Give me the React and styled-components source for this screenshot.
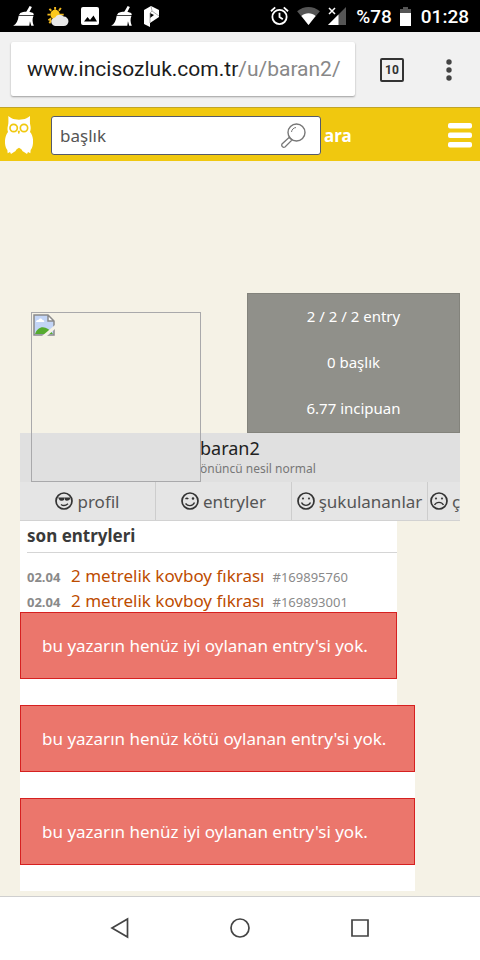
import React, { useState } from "react";
import styled, { createGlobalStyle } from "styled-components";

const GlobalStyle = createGlobalStyle`
  * {
    box-sizing: border-box;
  }
  body {
    margin: 0;
    background: #f5f2e6;
    font-family: "Noto Sans", "Open Sans", sans-serif;
  }
  button {
    border: 0;
    padding: 0;
    background: none;
    font-family: inherit;
    cursor: pointer;
  }
  svg {
    display: block;
    flex-shrink: 0;
  }
`;

const Screen = styled.div`
  min-height: 100vh;
  display: flex;
  flex-direction: column;
`;

/* phone chrome */

const StatusBar = styled.div`
  height: 32px;
  padding: 0 11px 0 13px;
  display: flex;
  align-items: center;
  justify-content: space-between;
  background: #000;
  color: #fff;
  font-family: Roboto, sans-serif;
  font-size: 19px;
  font-weight: 500;
`;

const StatusGroup = styled.div`
  display: flex;
  align-items: center;
  gap: ${(props) => props.$gap};
`;

const StatusText = styled.span`
  margin-left: 2px;
`;

const BrowserBar = styled.div`
  height: 75px;
  padding: 0 17px 0 11px;
  display: flex;
  align-items: center;
  background: #f1f1f1;
`;

const AddressBar = styled.button`
  flex: 1;
  min-width: 0;
  height: 54px;
  padding: 0 8px 0 16px;
  margin-bottom: 1px;
  overflow: hidden;
  white-space: nowrap;
  text-align: left;
  background: #fff;
  border-radius: 2px;
  box-shadow: 0 1px 2px rgba(0, 0, 0, 0.35);
  color: #1c1c1c;
  font-family: Roboto, sans-serif;
  font-size: 21px;
`;

const UrlPath = styled.span`
  color: #888;
`;

const TabCount = styled.button`
  width: 24px;
  height: 24px;
  margin: 0 31px 0 25px;
  border: 2px solid #333;
  border-radius: 2px;
  color: #333;
  font-family: Roboto, sans-serif;
  font-size: 12px;
  font-weight: 700;
  line-height: 20px;
`;

const NavBar = styled.nav`
  height: 64px;
  margin-top: auto;
  padding: 0 60px 2px;
  display: grid;
  grid-template-columns: repeat(3, 1fr);
  place-items: center;
  background: #fff;
  border-top: 1px solid #cfcfcf;
`;

/* site header */

const Header = styled.header`
  height: 54px;
  padding: 1px 8px 0 5px;
  display: flex;
  align-items: center;
  background: #f0c80f;
  border-top: 1px solid #c0a428;
`;

const SearchForm = styled.form`
  flex: 1;
  margin-left: 18px;
  display: flex;
  align-items: center;
  gap: 3px;
`;

const SearchBox = styled.div`
  width: 68%;
  height: 39px;
  padding: 0 14px 0 8px;
  display: flex;
  align-items: center;
  background: #fff;
  border: 1px solid #555a6b;
  border-radius: 3px;
`;

const SearchInput = styled.input`
  flex: 1;
  min-width: 0;
  padding: 0;
  border: 0;
  outline: 0;
  background: none;
  font-family: inherit;
  font-size: 17px;
  color: #555;

  &::placeholder {
    color: #555;
    opacity: 1;
  }
`;

const SearchButton = styled.button`
  color: #fff;
  font-size: 17px;
  font-weight: 700;
`;

/* profile */

const Page = styled.main`
  padding: 132px 20px 4px;
`;

const Cover = styled.section`
  position: relative;
`;

const Stats = styled.ul`
  width: 213px;
  margin: 0 0 0 auto;
  padding: 0;
  list-style: none;
  background: #90908a;
  border: 1px solid #83837c;
`;

const Stat = styled.li`
  height: 46px;
  line-height: 45px;
  text-align: center;
  color: #fff;
  font-size: 15px;
`;

const Avatar = styled.div`
  position: absolute;
  left: 11px;
  bottom: -49px;
  width: 170px;
  height: 170px;
  padding: 1px;
  border: 1px solid #a9a9ab;
`;

const NameBar = styled.div`
  height: 49px;
  padding: 4px 0 0 180px;
  background: #e0e0e0;
`;

const UserName = styled.h1`
  margin: 0;
  color: #222;
  font-size: 18px;
  font-weight: 400;
  line-height: 22px;
`;

const Generation = styled.p`
  margin: 0;
  color: #777;
  font-size: 12px;
  line-height: 20px;
`;

const Tabs = styled.nav`
  display: flex;
  height: 39px;
  overflow: hidden;
  background: #e5e5e5;
  border-bottom: 1px solid #d2d2d2;
`;

const Tab = styled.a`
  flex: 0 0 136px;
  display: flex;
  align-items: center;
  justify-content: ${(props) => (props.$cut ? "flex-start" : "center")};
  gap: 4px;
  padding-left: ${(props) => (props.$cut ? "2px" : "0")};
  border-right: 1px solid #cdcdcd;
  color: #555;
  font-size: 17px;
  text-decoration: none;
`;

/* entry lists */

const Panel = styled.section`
  width: max-content;
  max-width: 100%;
  background: #fff;
`;

const PanelTitle = styled.h2`
  margin: 0 0 0 7px;
  height: 32px;
  line-height: 30px;
  border-bottom: 1px solid #d5d5d5;
  color: #3a3a3a;
  font-size: 17px;
  font-weight: 700;
`;

const EntryList = styled.ul`
  margin: 0;
  padding: 9px 0 0 7px;
  list-style: none;
`;

const Entry = styled.li`
  display: flex;
  align-items: baseline;
  height: 25px;
  line-height: 27px;
  color: #8a8a8a;
  font-size: 13px;
`;

const EntryDate = styled.b`
  width: 44px;
`;

const EntryLink = styled.a`
  margin-right: 8px;
  color: #bd4c00;
  font-size: 17px;
  text-decoration: none;
`;

const Notice = styled.p`
  margin: 0;
  height: 67px;
  line-height: 66px;
  padding: 0 28px 0 21px;
  background: #eb766c;
  border: 1px solid #d62020;
  color: #fff;
  font-size: 17px;
`;

const NoticeSlot = styled.div`
  padding-bottom: 26px;
`;

/* icons */

const Broom = () => (
  <svg width="21" height="20" viewBox="0 0 64 62" fill="#fff">
    <path d="M51 0l7 3-9 18H39z" />
    <path d="M22 22c10-6 28-6 40 0l2 6H18z" />
    <path d="M17 30h46c-4 9-4 19 1 31H56l-4-14-2 14H0c10-5 15-15 17-31z" />
  </svg>
);

const Weather = () => (
  <svg width="23" height="21" viewBox="0 0 23 22">
    <g stroke="#f2b91d" strokeWidth="2">
      <path d="M9 1v3M3 3l2 2M1 9h3M2 15l3-2M15 2l-2 3M14 9h4M3 18l2-3" />
    </g>
    <circle cx="9" cy="9" r="5" fill="#fbc81d" />
    <path d="M10 21a4.500 4.500 0 0 1-1-9 5.500 5.500 0 0 1 9-1 5 5 0 0 1 0 10z" fill="#e9e9e9" />
  </svg>
);

const Picture = () => (
  <svg width="18" height="18" viewBox="0 0 18 18">
    <rect width="18" height="18" rx="2" fill="#fff" />
    <path d="M3 14.500 6.500 10l2.500 3 3.500-4.500 3.500 6z" fill="#000" />
  </svg>
);

const PLogo = () => (
  <svg width="16" height="21" viewBox="0 0 16 21">
    <path d="M0 4 7 0l8 4v7l-9 6v4l-6-3z" fill="#fff" />
    <path d="M6 7l4 2-4 3z" fill="#000" />
    <path d="M7 0l1 5 7 5M8 5 6 7v10" stroke="#999" strokeWidth=".8" fill="none" />
  </svg>
);

const Alarm = () => (
  <svg width="19" height="20" viewBox="0 0 20 20" fill="none" stroke="#fff" strokeWidth="1.900">
    <circle cx="10" cy="11" r="7.500" />
    <path d="M10 6.500V11l3.500 2.500M1 5l4.500-4M19 5l-4.500-4" />
  </svg>
);

const Wifi = () => (
  <svg width="23" height="18" viewBox="0 0 24 19">
    <path d="M0 4.500C7-1.500 17-1.500 24 4.500L12 19z" fill="#555" />
    <path d="M4.500 9.500c4-4 11-4 15 0L12 19z" fill="#fff" />
  </svg>
);

const Signal = () => (
  <svg width="18" height="18" viewBox="0 0 18 18">
    <path d="M18 0v18H0z" fill="#555" />
    <path d="M10.500 7.500V18H0z" fill="#fff" />
    <path d="M1 1l6 6M7 1 1 7" stroke="#fff" strokeWidth="1.500" />
  </svg>
);

const Battery = () => (
  <svg width="11" height="19" viewBox="0 0 11 19">
    <path d="M0 2h3V0h5v2h3v17H0z" fill="#555" />
    <path d="M0 6h11v13H0z" fill="#fff" />
  </svg>
);

const MoreDots = () => (
  <svg width="28" height="22" viewBox="0 0 28 22" fill="#444">
    <circle cx="14" cy="3" r="2.700" />
    <circle cx="14" cy="11" r="2.700" />
    <circle cx="14" cy="19" r="2.700" />
  </svg>
);

const Owl = () => (
  <svg width="28" height="38" viewBox="0 0 84 114">
    <path
      d="M10 0c7 5 13 9 20 10 8 2 16 2 24 0 7-1 14-5 21-10 0 12-1 20 1 28 2 9 1 13-1 20 8 8 10 22 9 34-1 10-3 16-7 20l-1 10-7-4-3 6-9-6-4-2-4-6-7-5-7 5-4 6-4 2-9 6-3-6-7 4-1-10C3 98 1 92 0 82-1 70 2 56 9 48c-2-7-2-11 0-20 2-8 1-16 1-28z"
      fill="#fff"
    />
    <g fill="none" stroke="#f0c80f" strokeWidth="5">
      <circle cx="26" cy="36" r="11" />
      <circle cx="57" cy="36" r="11" />
    </g>
    <path d="M38 44h7l-2 9h-3z" fill="#f0c80f" />
  </svg>
);

const Magnifier = () => (
  <svg width="25" height="25" viewBox="0 0 25 25" fill="none" stroke="#777">
    <circle cx="15.500" cy="9.500" r="8.500" strokeWidth="1.400" />
    <path d="M10.500 9c.3-2.500 2-4.200 4.500-4.500" />
    <path d="M9.500 15.500 11 17l-7 7c-2 1-4-1-3-3l7-6.500z" strokeWidth="1.300" />
  </svg>
);

const Hamburger = () => (
  <svg width="24" height="25" viewBox="0 0 24 25" fill="#fff">
    <rect width="24" height="5.500" rx="2" />
    <rect y="9.500" width="24" height="5.500" rx="2" />
    <rect y="19" width="24" height="5.500" rx="2" />
  </svg>
);

const BrokenImage = () => (
  <svg width="22" height="22" viewBox="0 0 22 22">
    <path d="M1 1h14l6 6v14H1z" fill="#c3d5f6" />
    <path d="M3 8c0-2 2-2 2.500-2C6 4 9 4 9.500 6c2 0 2 2 1.500 2z" fill="#fff" />
    <path d="M2 20c3-9 12-9 18 0z" fill="#56ab2f" />
    <path d="M15 1v6h6z" fill="#fff" />
    <path d="M1 21V1h14l6 6v14zM15 1v6h6" fill="none" stroke="#8b8b8b" strokeWidth="1.500" />
    <path d="M9 22 22 11v4l-8 7z" fill="#f5f2e6" />
  </svg>
);

const faces = {
  cool: (
    <>
      <path d="M3 5.500h6v2.500c-1 1-4 1-4.500 0zM9 5.500h6v1.500c-1 2-4 2-5 1z" fill="#333" stroke="none" />
      <path d="M6 12.500c2 1.500 5 1 7-.8" />
    </>
  ),
  wink: (
    <>
      <path d="M4.500 7c.8-.8 2-.8 2.800 0M4.500 11.500c2.500 3 7 3 9-1" />
      <circle cx="12" cy="6.500" r=".6" fill="#333" />
    </>
  ),
  smile: (
    <>
      <circle cx="6" cy="6.500" r=".4" fill="#333" />
      <circle cx="12" cy="6.500" r=".4" fill="#333" />
      <path d="M4.500 10.500c2 3.800 7 3.800 9 0" />
    </>
  ),
  sad: (
    <>
      <circle cx="6" cy="6.500" r=".4" fill="#333" />
      <circle cx="12" cy="6.500" r=".4" fill="#333" />
      <path d="M4.500 13c2-3.500 7-3.500 9 0" />
    </>
  ),
};

const Face = ({ kind }) => (
  <svg width="18" height="18" viewBox="0 0 18 18" fill="none" stroke="#333" strokeWidth="1.400">
    <circle cx="9" cy="9" r="8" strokeWidth="1.700" />
    {faces[kind]}
  </svg>
);

const NavIcon = ({ children }) => (
  <svg width="22" height="22" viewBox="0 0 22 22" fill="none" stroke="#444" strokeWidth="1.700">
    {children}
  </svg>
);

const tabs = [
  { label: "profil", face: "cool" },
  { label: "entryler", face: "wink" },
  { label: "şukulananlar", face: "smile" },
  { label: "ç", face: "sad", cut: true },
];

const entries = [
  { date: "02.04", title: "2 metrelik kovboy fıkrası", id: "#169895760" },
  { date: "02.04", title: "2 metrelik kovboy fıkrası", id: "#169893001" },
];

export default function App() {
  const [query, setQuery] = useState("");

  return (
    <Screen>
      <GlobalStyle />
      <StatusBar>
        <StatusGroup $gap="12px">
          <Broom />
          <Weather />
          <Picture />
          <Broom />
          <PLogo />
        </StatusGroup>
        <StatusGroup $gap="8px">
          <Alarm />
          <Wifi />
          <Signal />
          <StatusText>%78</StatusText>
          <Battery />
          <StatusText>01:28</StatusText>
        </StatusGroup>
      </StatusBar>

      <BrowserBar>
        <AddressBar>
          www.incisozluk.com.tr<UrlPath>/u/baran2/</UrlPath>
        </AddressBar>
        <TabCount>10</TabCount>
        <button aria-label="menü">
          <MoreDots />
        </button>
      </BrowserBar>

      <Header>
        <a href="#home" aria-label="inci sözlük">
          <Owl />
        </a>
        <SearchForm onSubmit={(e) => e.preventDefault()}>
          <SearchBox>
            <SearchInput
              aria-label="başlık"
              placeholder="başlık"
              value={query}
              onChange={(e) => setQuery(e.target.value)}
            />
            <Magnifier />
          </SearchBox>
          <SearchButton type="submit">ara</SearchButton>
        </SearchForm>
        <button aria-label="site menüsü">
          <Hamburger />
        </button>
      </Header>

      <Page>
        <Cover>
          <Stats>
            <Stat>2 / 2 / 2 entry</Stat>
            <Stat>0 başlık</Stat>
            <Stat>6.77 incipuan</Stat>
          </Stats>
          <Avatar>
            <BrokenImage />
          </Avatar>
        </Cover>
        <NameBar>
          <UserName>baran2</UserName>
          <Generation>önüncü nesil normal</Generation>
        </NameBar>
        <Tabs>
          {tabs.map((tab) => (
            <Tab key={tab.face} href={"#" + tab.face} $cut={tab.cut}>
              <Face kind={tab.face} />
              {tab.label}
            </Tab>
          ))}
        </Tabs>

        <Panel>
          <PanelTitle>son entryleri</PanelTitle>
          <EntryList>
            {entries.map((entry) => (
              <Entry key={entry.id}>
                <EntryDate>{entry.date}</EntryDate>
                <EntryLink href={entry.id}>{entry.title}</EntryLink>
                {entry.id}
              </Entry>
            ))}
          </EntryList>
          <NoticeSlot>
            <Notice>bu yazarın henüz iyi oylanan entry'si yok.</Notice>
          </NoticeSlot>
        </Panel>
        <Panel>
          <NoticeSlot>
            <Notice>bu yazarın henüz kötü oylanan entry'si yok.</Notice>
          </NoticeSlot>
          <NoticeSlot>
            <Notice>bu yazarın henüz iyi oylanan entry'si yok.</Notice>
          </NoticeSlot>
        </Panel>
      </Page>

      <NavBar>
        <button aria-label="geri">
          <NavIcon>
            <path d="M18.500 2v18L3 11z" />
          </NavIcon>
        </button>
        <button aria-label="ana ekran">
          <NavIcon>
            <circle cx="11" cy="11" r="9" />
          </NavIcon>
        </button>
        <button aria-label="son uygulamalar">
          <NavIcon>
            <path d="M3 3h16v16H3z" />
          </NavIcon>
        </button>
      </NavBar>
    </Screen>
  );
}
